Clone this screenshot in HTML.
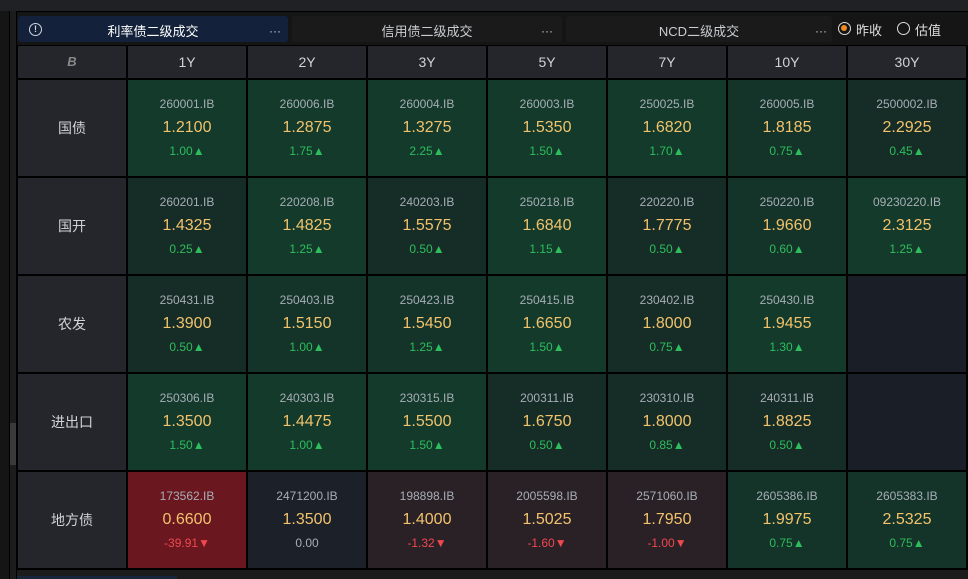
<!DOCTYPE html><html><head><meta charset="utf-8"><style>
*{margin:0;padding:0;box-sizing:border-box}
body{width:968px;height:579px;background:#000;position:relative;overflow:hidden;font-family:"Liberation Sans","Noto Sans CJK SC",sans-serif}
.a{position:absolute}
.c{position:absolute;width:118px;height:96px;text-align:center}
.code{position:absolute;top:17px;width:100%;font-size:12px;color:#a7adb5}
.v{position:absolute;top:39px;width:100%;font-size:16px;color:#f2c26c}
.ch{position:absolute;top:64px;width:100%;font-size:12px;color:#2dbd5c}
.dn{color:#f0484f}
.nu{color:#a7adb5}
.B{background:#133a2b}.D{background:#162d27}.E{background:#191e27}.R{background:#6a1720}.P{background:#2a2127}.N{background:#1b2029}
.lab{position:absolute;left:18px;width:108px;height:96px;background:#25262b;color:#d0d3d8;font-size:14px;text-align:center;line-height:96px}
.h{position:absolute;top:46px;width:118px;height:32px;background:#25262b;color:#cfd3d8;font-size:14px;text-align:center;line-height:32px}
.dots{position:absolute;top:25px;color:#ccc;font-size:12px;line-height:12px}
</style></head><body>
<div class="a" style="left:0;top:0;width:968px;height:11px;background:#202125"></div>
<div class="a" style="left:0;top:11px;width:9px;height:568px;background:#151515"></div>
<div class="a" style="left:10px;top:11px;width:6px;height:568px;background:#1c1c1c"></div>
<div class="a" style="left:10px;top:423px;width:6px;height:42px;background:#3a3a3a"></div>
<div class="a" style="left:17px;top:12px;width:951px;height:33px;background:#151515"></div>
<div class="a" style="left:18px;top:16px;width:270px;height:26px;background:#13223a;border-radius:3px"></div>
<div class="a" style="left:29px;top:23px;width:13px;height:13px;border:1.5px solid #d0d6e0;border-radius:50%;color:#d0d6e0;font-size:9px;line-height:10px;text-align:center;font-weight:bold">!</div>
<div class="a" style="left:18px;top:21px;width:270px;text-align:center;color:#fff;font-size:13px">利率债二级成交</div>
<div class="dots" style="left:269px">···</div>
<div class="a" style="left:292px;top:16px;width:270px;height:26px;background:#1a1a1a;border-radius:3px"></div>
<div class="a" style="left:292px;top:21px;width:270px;text-align:center;color:#c9ccd1;font-size:13px">信用债二级成交</div>
<div class="dots" style="left:541px">···</div>
<div class="a" style="left:566px;top:16px;width:266px;height:26px;background:#1a1a1a;border-radius:3px"></div>
<div class="a" style="left:566px;top:21px;width:266px;text-align:center;color:#c9ccd1;font-size:13px">NCD二级成交</div>
<div class="dots" style="left:815px">···</div>
<div class="a" style="left:838px;top:22px;width:13px;height:13px;border:1.5px solid #ddd;border-radius:50%"><div class="a" style="left:2px;top:2px;width:6px;height:6px;border-radius:50%;background:#f08a24"></div></div>
<div class="a" style="left:856px;top:20px;color:#ddd;font-size:13px">昨收</div>
<div class="a" style="left:897px;top:22px;width:13px;height:13px;border:1.5px solid #ddd;border-radius:50%"></div>
<div class="a" style="left:915px;top:20px;color:#ddd;font-size:13px">估值</div>
<div class="a" style="left:18px;top:46px;width:108px;height:32px;background:#25262b;color:#888;font-size:13px;font-weight:bold;font-style:italic;text-align:center;line-height:32px">B</div>
<div class="h" style="left:128px">1Y</div><div class="h" style="left:248px">2Y</div><div class="h" style="left:368px">3Y</div><div class="h" style="left:488px">5Y</div><div class="h" style="left:608px">7Y</div><div class="h" style="left:728px">10Y</div><div class="h" style="left:848px">30Y</div>
<div class="lab" style="top:80px">国债</div><div class="lab" style="top:178px">国开</div><div class="lab" style="top:276px">农发</div><div class="lab" style="top:374px">进出口</div><div class="lab" style="top:472px">地方债</div>

<div class="c B" style="left:128px;top:80px"><div class="code">260001.IB</div><div class="v">1.2100</div><div class="ch">1.00▲</div></div>
<div class="c B" style="left:248px;top:80px"><div class="code">260006.IB</div><div class="v">1.2875</div><div class="ch">1.75▲</div></div>
<div class="c B" style="left:368px;top:80px"><div class="code">260004.IB</div><div class="v">1.3275</div><div class="ch">2.25▲</div></div>
<div class="c B" style="left:488px;top:80px"><div class="code">260003.IB</div><div class="v">1.5350</div><div class="ch">1.50▲</div></div>
<div class="c B" style="left:608px;top:80px"><div class="code">250025.IB</div><div class="v">1.6820</div><div class="ch">1.70▲</div></div>
<div class="c D" style="left:728px;top:80px;background:#143429"><div class="code">260005.IB</div><div class="v">1.8185</div><div class="ch">0.75▲</div></div>
<div class="c D" style="left:848px;top:80px"><div class="code">2500002.IB</div><div class="v">2.2925</div><div class="ch">0.45▲</div></div>

<div class="c D" style="left:128px;top:178px"><div class="code">260201.IB</div><div class="v">1.4325</div><div class="ch">0.25▲</div></div>
<div class="c B" style="left:248px;top:178px"><div class="code">220208.IB</div><div class="v">1.4825</div><div class="ch">1.25▲</div></div>
<div class="c D" style="left:368px;top:178px"><div class="code">240203.IB</div><div class="v">1.5575</div><div class="ch">0.50▲</div></div>
<div class="c B" style="left:488px;top:178px"><div class="code">250218.IB</div><div class="v">1.6840</div><div class="ch">1.15▲</div></div>
<div class="c D" style="left:608px;top:178px"><div class="code">220220.IB</div><div class="v">1.7775</div><div class="ch">0.50▲</div></div>
<div class="c D" style="left:728px;top:178px;background:#143429"><div class="code">250220.IB</div><div class="v">1.9660</div><div class="ch">0.60▲</div></div>
<div class="c B" style="left:848px;top:178px"><div class="code">09230220.IB</div><div class="v">2.3125</div><div class="ch">1.25▲</div></div>

<div class="c D" style="left:128px;top:276px"><div class="code">250431.IB</div><div class="v">1.3900</div><div class="ch">0.50▲</div></div>
<div class="c D" style="left:248px;top:276px;background:#143429"><div class="code">250403.IB</div><div class="v">1.5150</div><div class="ch">1.00▲</div></div>
<div class="c D" style="left:368px;top:276px;background:#143429"><div class="code">250423.IB</div><div class="v">1.5450</div><div class="ch">1.25▲</div></div>
<div class="c B" style="left:488px;top:276px"><div class="code">250415.IB</div><div class="v">1.6650</div><div class="ch">1.50▲</div></div>
<div class="c D" style="left:608px;top:276px"><div class="code">230402.IB</div><div class="v">1.8000</div><div class="ch">0.75▲</div></div>
<div class="c B" style="left:728px;top:276px"><div class="code">250430.IB</div><div class="v">1.9455</div><div class="ch">1.30▲</div></div>
<div class="c E" style="left:848px;top:276px"></div>

<div class="c B" style="left:128px;top:374px"><div class="code">250306.IB</div><div class="v">1.3500</div><div class="ch">1.50▲</div></div>
<div class="c B" style="left:248px;top:374px"><div class="code">240303.IB</div><div class="v">1.4475</div><div class="ch">1.00▲</div></div>
<div class="c B" style="left:368px;top:374px"><div class="code">230315.IB</div><div class="v">1.5500</div><div class="ch">1.50▲</div></div>
<div class="c D" style="left:488px;top:374px"><div class="code">200311.IB</div><div class="v">1.6750</div><div class="ch">0.50▲</div></div>
<div class="c D" style="left:608px;top:374px"><div class="code">230310.IB</div><div class="v">1.8000</div><div class="ch">0.85▲</div></div>
<div class="c D" style="left:728px;top:374px"><div class="code">240311.IB</div><div class="v">1.8825</div><div class="ch">0.50▲</div></div>
<div class="c E" style="left:848px;top:374px"></div>

<div class="c R" style="left:128px;top:472px"><div class="code">173562.IB</div><div class="v">0.6600</div><div class="ch dn">-39.91▼</div></div>
<div class="c N" style="left:248px;top:472px"><div class="code">2471200.IB</div><div class="v">1.3500</div><div class="ch nu">0.00</div></div>
<div class="c P" style="left:368px;top:472px"><div class="code">198898.IB</div><div class="v">1.4000</div><div class="ch dn">-1.32▼</div></div>
<div class="c P" style="left:488px;top:472px"><div class="code">2005598.IB</div><div class="v">1.5025</div><div class="ch dn">-1.60▼</div></div>
<div class="c P" style="left:608px;top:472px"><div class="code">2571060.IB</div><div class="v">1.7950</div><div class="ch dn">-1.00▼</div></div>
<div class="c D" style="left:728px;top:472px;background:#143429"><div class="code">2605386.IB</div><div class="v">1.9975</div><div class="ch">0.75▲</div></div>
<div class="c D" style="left:848px;top:472px;background:#143429"><div class="code">2605383.IB</div><div class="v">2.5325</div><div class="ch">0.75▲</div></div>
<div class="a" style="left:17px;top:570px;width:951px;height:9px;background:#1c1c1c"></div>
<div class="a" style="left:17px;top:576px;width:160px;height:3px;background:#17253a"></div>
</body></html>
